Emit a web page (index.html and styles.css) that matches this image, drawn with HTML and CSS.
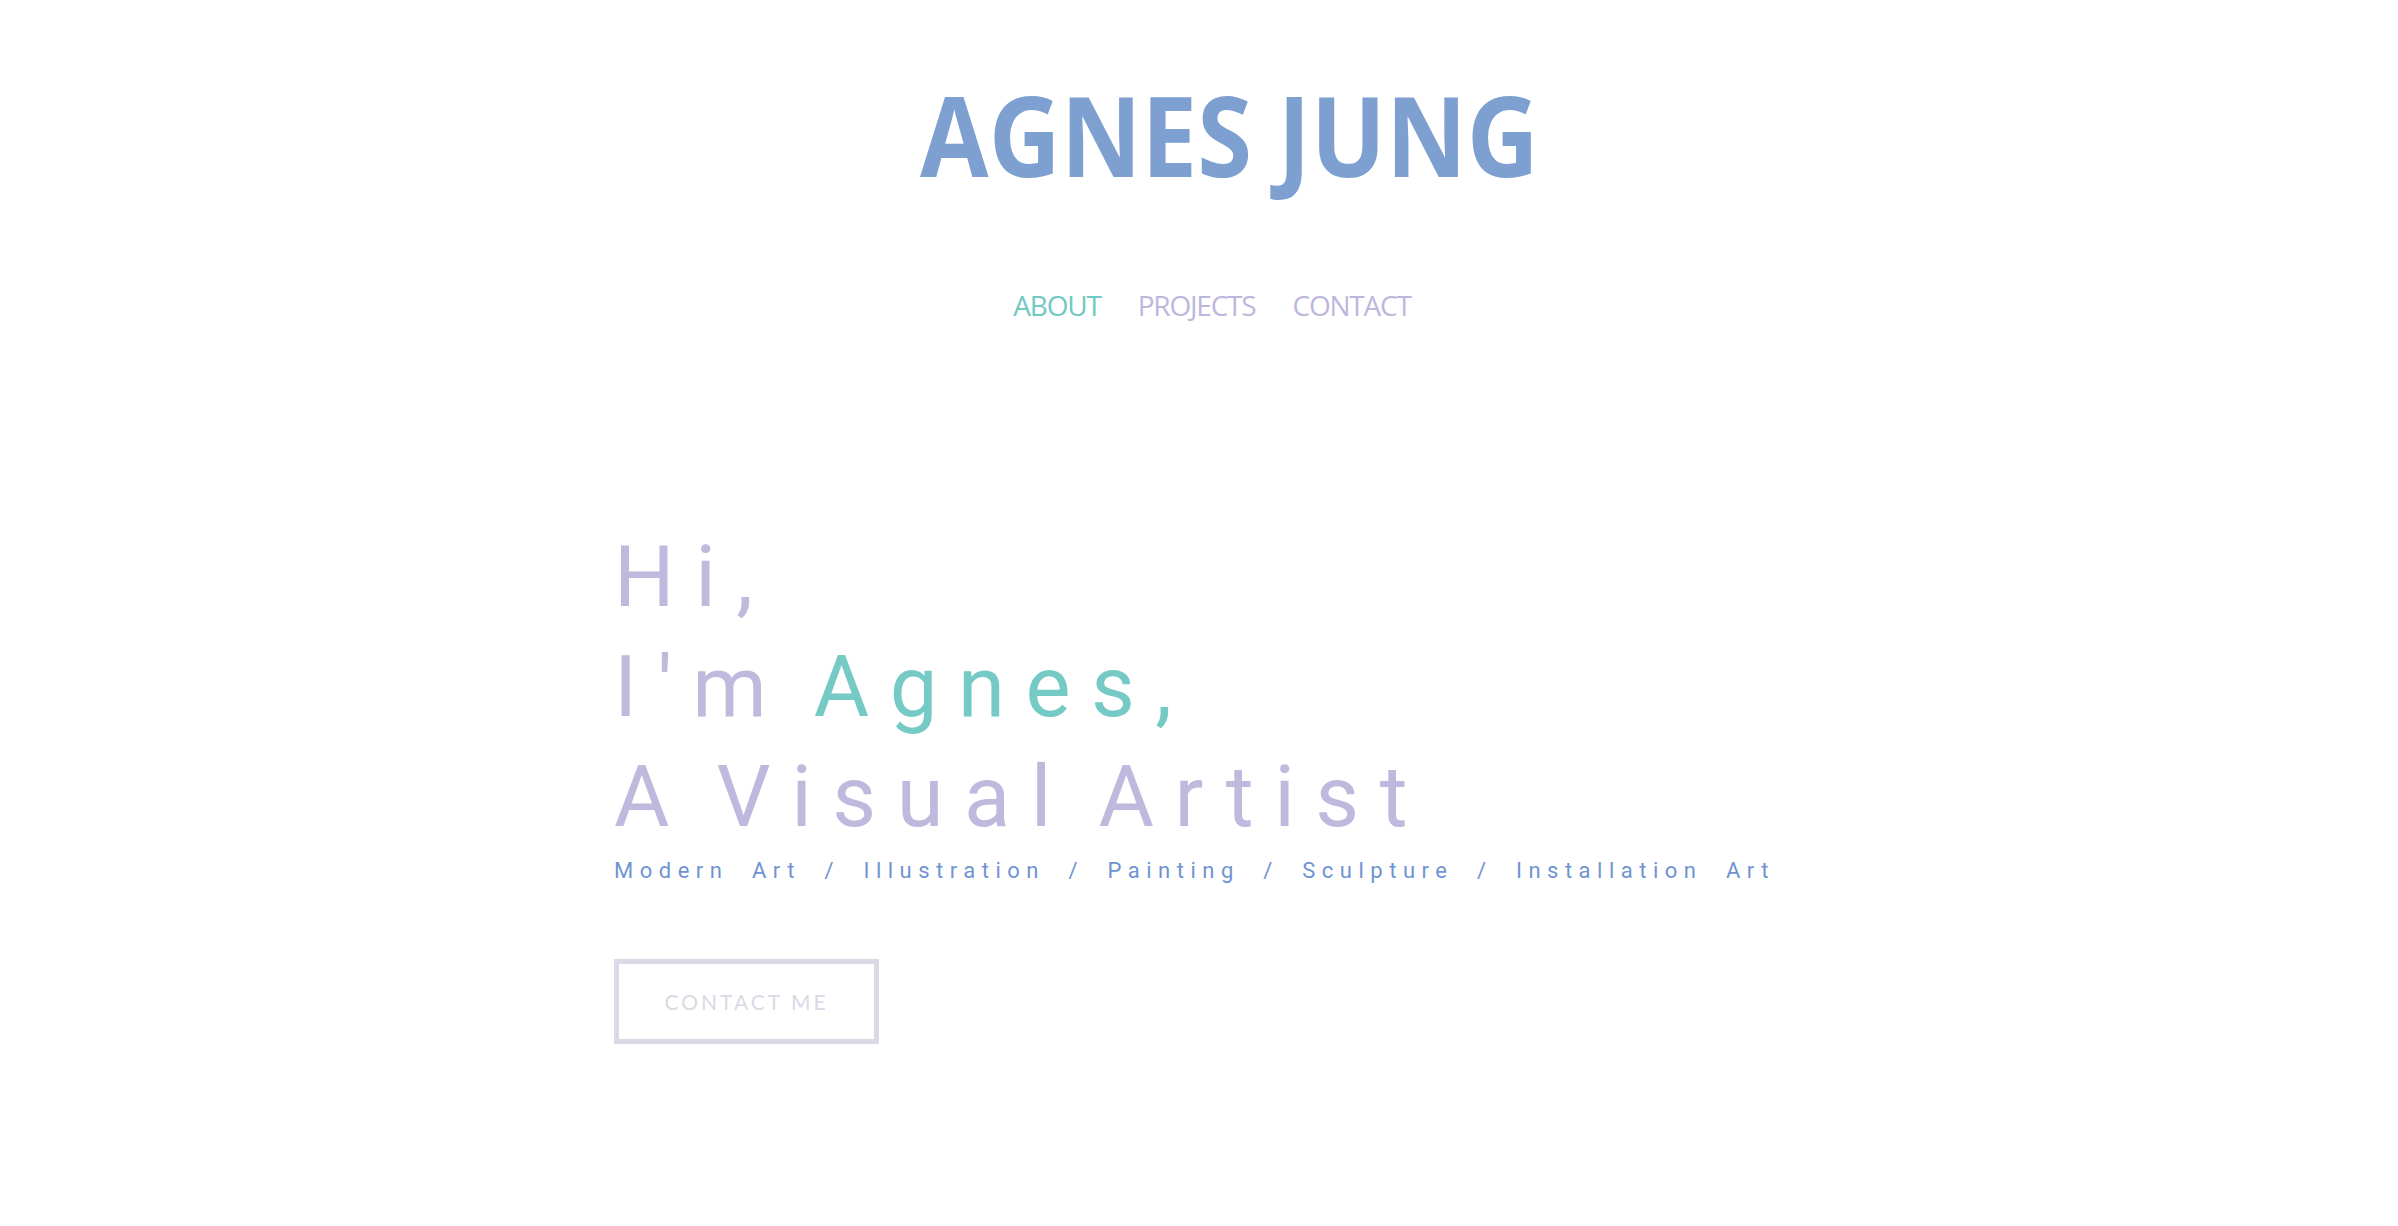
FILE: index.html
```html
<!DOCTYPE html>
<html lang="en">
<head>
<meta charset="utf-8">
<title>Agnes Jung</title>
<link rel="stylesheet" href="styles.css">
</head>
<body>
<header class="site-header">
  <h1 class="brand"><span class="brand-text">AGNES JUNG</span></h1>
  <nav class="nav">
    <a class="nav-link active" href="#about">ABOUT</a>
    <a class="nav-link" href="#projects">PROJECTS</a>
    <a class="nav-link" href="#contact">CONTACT</a>
  </nav>
</header>
<main class="container hero">
  <h2 class="hero-title">Hi,<br>I'm <span class="accent">Agnes,</span><br>A Visual Artist</h2>
  <p class="hero-sub">Modern Art / Illustration / Painting / Sculpture / Installation Art</p>
  <a class="btn" href="#contact">CONTACT ME</a>
</main>
</body>
</html>
```
FILE: styles.css
```css
html, body {
  margin: 0;
  padding: 0;
  background: #ffffff;
}

body {
  font-family: "Lato", "Open Sans", sans-serif;
}

.site-header {
  padding-top: 78px;
  text-align: center;
}

.brand {
  margin: 0;
  padding-left: 60px;
  font-family: "Open Sans", sans-serif;
  font-weight: 700;
  font-size: 112px;
  line-height: 112px;
  color: #7ea0d1;
}

.brand-text {
  display: inline-block;
  transform: scaleX(0.888);
  transform-origin: center;
}

.nav {
  margin-top: 95px;
  padding-left: 26px;
  display: flex;
  justify-content: center;
  gap: 37px;
}

.nav-link {
  font-family: "Open Sans", sans-serif;
  font-size: 28px;
  line-height: 40px;
  letter-spacing: -1.2px;
  color: #bdb7dd;
  text-decoration: none;
}

.nav-link.active {
  color: #72c8c4;
}

.container {
  width: 1170px;
  margin: 0 auto;
}

.hero {
  margin-top: 197px;
}

.hero-title {
  margin: 0;
  font-family: "Roboto", "Lato", sans-serif;
  font-weight: 400;
  font-size: 85px;
  line-height: 110px;
  letter-spacing: 20.5px;
  word-spacing: -15px;
  color: #c1b9dd;
}

.accent {
  color: #76cac6;
}

.hero-sub {
  margin: 4px 0 0;
  font-family: "Roboto", "Lato", sans-serif;
  font-size: 22px;
  line-height: 30px;
  letter-spacing: 6.5px;
  word-spacing: 11.5px;
  color: #6f94d2;
}

.btn {
  margin-top: 73px;
  display: inline-flex;
  align-items: center;
  justify-content: center;
  box-sizing: border-box;
  width: 265px;
  height: 85px;
  border: 5px solid #dcd8e5;
  font-size: 21px;
  letter-spacing: 3px;
  color: #dcd9e5;
  text-decoration: none;
}
```
